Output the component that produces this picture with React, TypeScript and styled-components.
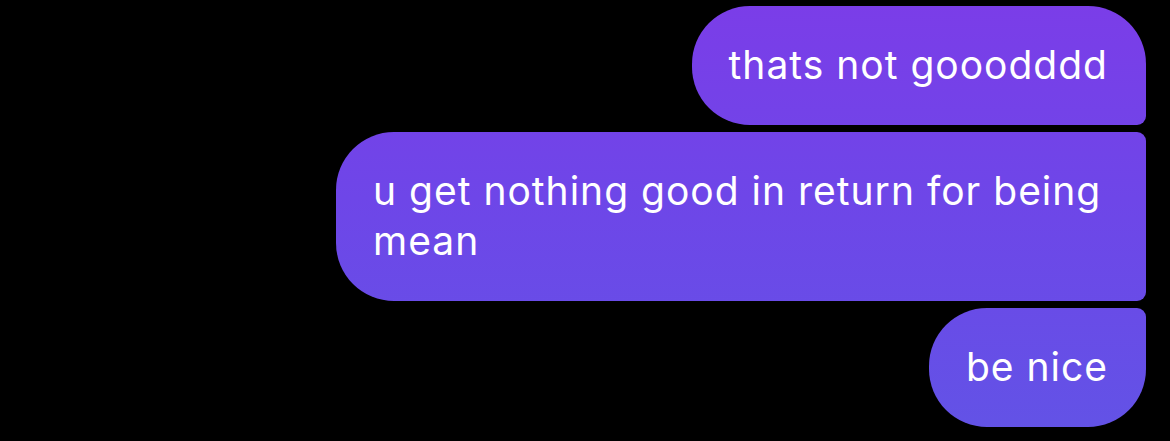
import React from "react";
import styled, { createGlobalStyle } from "styled-components";

const Global = createGlobalStyle`
  html, body { margin: 0; padding: 0; background: #000; }
  body { width: 1170px; height: 441px; overflow: hidden; }
`;

const Thread = styled.div`
  display: flex;
  flex-direction: column;
  align-items: flex-end;
  gap: 7px;
  padding: 6px 24px 0 0;
  box-sizing: border-box;
  width: 1170px;
  height: 441px;
  background: #000;
`;

type Pos = "first" | "middle" | "last";

const radii: Record<Pos, string> = {
  first: "58px 58px 9px 58px",
  middle: "58px 9px 9px 58px",
  last: "58px 9px 58px 58px",
};

const Bubble = styled.div<{ $pos: Pos }>`
  box-sizing: border-box;
  max-width: 810px;
  padding: 34px 38px 35px 37px;
  border-radius: ${(p) => radii[p.$pos]};
  background: linear-gradient(180deg, #7b3de8 0%, #6e46e8 45%, #6253e6 100%);
  background-attachment: fixed;
  color: #ffffff;
  font-family: Inter, "Noto Sans", sans-serif;
  font-size: 39px;
  line-height: 50px;
  letter-spacing: 1px;
`;

const messages: { text: string; pos: Pos }[] = [
  { text: "thats not gooodddd", pos: "first" },
  { text: "u get nothing good in return for being mean", pos: "middle" },
  { text: "be nice", pos: "last" },
];

export default function App() {
  return (
    <>
      <Global />
      <Thread>
        {messages.map((m) => (
          <Bubble key={m.text} $pos={m.pos}>
            {m.text}
          </Bubble>
        ))}
      </Thread>
    </>
  );
}
